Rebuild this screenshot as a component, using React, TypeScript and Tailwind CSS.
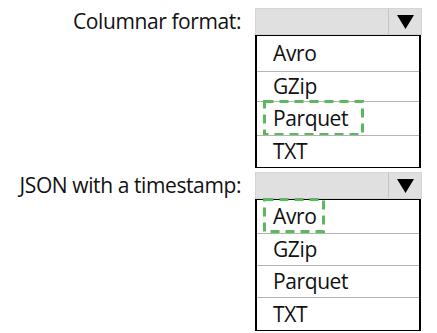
const OPTIONS = ["Avro", "GZip", "Parquet", "TXT"];

type DropdownProps = {
  label: string;
  rowHeights: number[];
  answer: string;
  boxWidth: number;
};

function Arrow() {
  return (
    <svg width="17" height="14" viewBox="0 0 17 14">
      <polygon points="0,0 17,0 8.5,14" fill="#000" />
    </svg>
  );
}

// green dashed answer marker, drawn so the dash length matches
function Marker({ width, height }: { width: number; height: number }) {
  return (
    <svg
      className="pointer-events-none absolute left-[6px] top-[-2px]"
      width={width}
      height={height}
    >
      <rect
        x="1.5"
        y="1.5"
        width={width - 3}
        height={height - 3}
        fill="none"
        stroke="#5cb85c"
        strokeWidth="3"
        strokeDasharray="9 6"
      />
    </svg>
  );
}

function Dropdown({ label, rowHeights, answer, boxWidth }: DropdownProps) {
  return (
    <div className="flex items-start">
      <div className="flex h-[27px] w-[243px] items-center justify-end pr-[2px] text-[21px] leading-none tracking-[-0.4px] text-[#111]">
        {label}
      </div>
      <div className="ml-[12px] flex w-[167px] flex-col">
        <div className="flex h-[27px] border border-[#d4d4d4] bg-[#e0e0e0]">
          <div className="flex-1" />
          <div className="flex w-[33px] items-center justify-center border-l border-[#c4c4c4]">
            <Arrow />
          </div>
        </div>
        <div className="flex w-[166px] flex-col border border-x-2 border-black bg-white">
          {OPTIONS.map((opt, i) => (
            <div
              key={opt}
              className={`relative flex items-center pl-[16px] text-[21px] leading-none tracking-[-0.4px] text-[#111] ${
                i > 0 ? "border-t border-[#b4b4b4]" : ""
              }`}
              style={{ height: rowHeights[i] }}
            >
              {opt}
              {opt === answer && (
                <Marker width={boxWidth} height={rowHeights[i] + 2} />
              )}
            </div>
          ))}
        </div>
      </div>
    </div>
  );
}

export default function App() {
  return (
    <div className="flex h-[333px] w-[437px] flex-col gap-[4px] bg-white pt-[8px] font-['Open_Sans',sans-serif]">
      <Dropdown
        label="Columnar format:"
        rowHeights={[35, 30, 34, 32]}
        answer="Parquet"
        boxWidth={101}
      />
      <Dropdown
        label="JSON with a timestamp:"
        rowHeights={[33, 32, 32, 33]}
        answer="Avro"
        boxWidth={62}
      />
    </div>
  );
}
